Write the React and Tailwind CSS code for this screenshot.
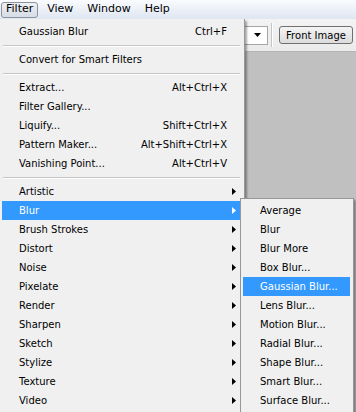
const MAIN = [
  { label: 'Gaussian Blur', key: 'Ctrl+F' },
  'sep',
  { label: 'Convert for Smart Filters' },
  'sep',
  { label: 'Extract...', key: 'Alt+Ctrl+X' },
  { label: 'Filter Gallery...' },
  { label: 'Liquify...', key: 'Shift+Ctrl+X' },
  { label: 'Pattern Maker...', key: 'Alt+Shift+Ctrl+X' },
  { label: 'Vanishing Point...', key: 'Alt+Ctrl+V' },
  'sep',
  { label: 'Artistic', sub: true },
  { label: 'Blur', sub: true, active: true },
  { label: 'Brush Strokes', sub: true },
  { label: 'Distort', sub: true },
  { label: 'Noise', sub: true },
  { label: 'Pixelate', sub: true },
  { label: 'Render', sub: true },
  { label: 'Sharpen', sub: true },
  { label: 'Sketch', sub: true },
  { label: 'Stylize', sub: true },
  { label: 'Texture', sub: true },
  { label: 'Video', sub: true },
]

const BLUR = [
  'Average', 'Blur', 'Blur More', 'Box Blur...', 'Gaussian Blur...', 'Lens Blur...',
  'Motion Blur...', 'Radial Blur...', 'Shape Blur...', 'Smart Blur...', 'Surface Blur...',
]

function Arrow({ white }) {
  return (
    <svg width="4" height="7" viewBox="0 0 4 7" className="block">
      <path d="M0 0L4 3.5L0 7Z" fill={white ? '#fff' : '#000'} />
    </svg>
  )
}

function Sep() {
  return (
    <div className="h-[9px] flex flex-col justify-center ml-[3px] mr-[4px]">
      <div className="h-px bg-[#c5c5c5]" />
      <div className="h-px bg-white" />
    </div>
  )
}

function MenuRow({ item }) {
  const on = item.active
  return (
    <div className={`h-[19px] ml-[2px] mr-[4px] pl-[17px] flex items-center ${on ? 'bg-[#3399ff] text-white' : 'text-black'}`}>
      <span className="flex-1 whitespace-nowrap">{item.label}</span>
      {item.key && <span className="whitespace-nowrap">{item.key}</span>}
      <span className="w-[13px] flex justify-end pr-[4px]">{item.sub && <Arrow white={on} />}</span>
    </div>
  )
}

export default function App() {
  return (
    <div className="relative w-[356px] h-[412px] overflow-hidden bg-[#c0c0c0] font-['DejaVu_Sans',sans-serif] text-[10px]">
      {/* menu bar */}
      <div className="h-[19px] flex items-center gap-[4px] pl-[1px] bg-gradient-to-b from-[#f9fbfe] to-[#dfe6f1] text-[11px] text-black">
        <div className="h-[16px] flex items-center px-[4px] border border-[#8c939c] rounded-[3px] bg-gradient-to-b from-[#eef1f5] to-[#d6dce5]">Filter</div>
        <div className="px-[5px]">View</div>
        <div className="px-[5px]">Window</div>
        <div className="px-[5px]">Help</div>
      </div>

      {/* options toolbar */}
      <div className="h-[33px] flex items-center justify-end pr-[3px] bg-gradient-to-b from-[#f3f3f3] to-[#ebebeb] border-b border-[#b5b5b5]">
        <div className="w-[60px] h-[19px] flex items-center justify-end pr-[6px] bg-white border border-[#a5a5a5]">
          <svg width="7" height="4" viewBox="0 0 7 4"><path d="M0 0H7L3.5 4Z" fill="#000" /></svg>
        </div>
        <div className="w-px h-[24px] bg-[#c4c4c4] ml-[3px] mr-[7px] shadow-[1px_0_0_#fff]" />
        <div className="w-[74px] h-[18px] flex items-center justify-center rounded-[3px] border border-[#707070] bg-gradient-to-b from-[#f4f4f4] to-[#dcdcdc] text-black">
          Front Image
        </div>
      </div>

      {/* Filter menu */}
      <div className="absolute left-0 top-[19px] w-[245px] h-[400px] bg-[#f0f0f0] border-r border-[#979797] shadow-[2px_2px_2px_rgba(0,0,0,0.35)] pt-[3px]">
        {MAIN.map((it, i) => (it === 'sep' ? <Sep key={i} /> : <MenuRow key={i} item={it} />))}
      </div>

      {/* Blur submenu */}
      <div className="absolute left-[240px] top-[198px] w-[114px] h-[230px] bg-[#f0f0f0] border border-[#979797] shadow-[2px_2px_2px_rgba(0,0,0,0.35)] pt-[2px]">
        {BLUR.map((b) => (
          <div key={b} className={`h-[19px] ml-[2px] mr-[3px] pl-[17px] flex items-center whitespace-nowrap ${b === 'Gaussian Blur...' ? 'bg-[#3399ff] text-white' : 'text-black'}`}>
            {b}
          </div>
        ))}
      </div>
    </div>
  )
}
